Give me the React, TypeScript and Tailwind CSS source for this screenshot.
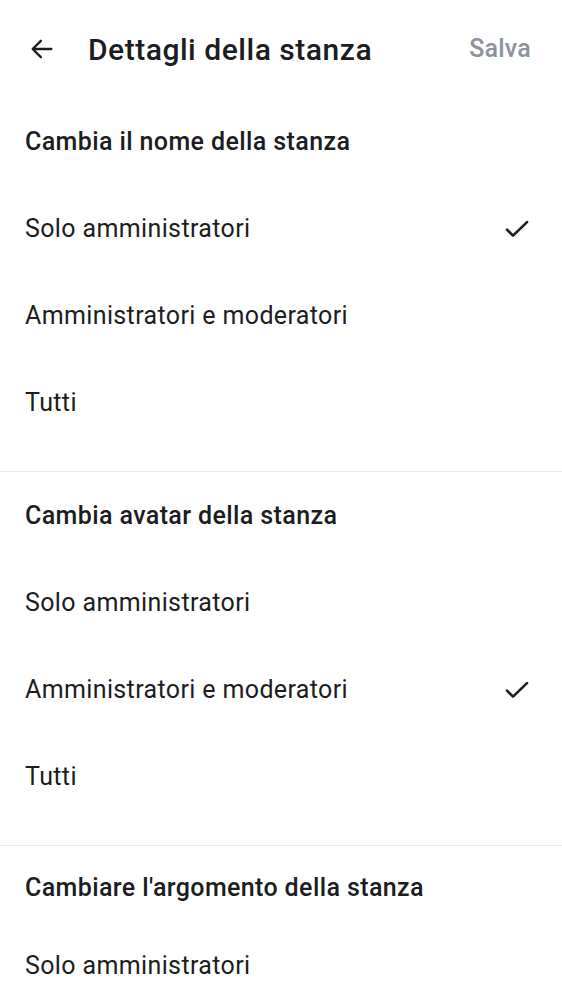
import React from "react";

const Check = () => (
  <svg width="30" height="30" viewBox="0 0 24 24" fill="none" stroke="#1b1d22" strokeWidth="2.1" strokeLinecap="round" strokeLinejoin="round">
    <path d="M4 12.5l4.8 4.8L20 6.5" />
  </svg>
);

const Arrow = () => (
  <svg width="28" height="28" viewBox="0 0 24 24" fill="none" stroke="#1b1d22" strokeWidth="2" strokeLinecap="round" strokeLinejoin="round">
    <path d="M20 12H4.5M11 5l-7 7 7 7" />
  </svg>
);

type Section = { title: string; options: string[]; selected: number };

const sections: Section[] = [
  { title: "Cambia il nome della stanza", options: ["Solo amministratori", "Amministratori e moderatori", "Tutti"], selected: 0 },
  { title: "Cambia avatar della stanza", options: ["Solo amministratori", "Amministratori e moderatori", "Tutti"], selected: 1 },
  { title: "Cambiare l'argomento della stanza", options: ["Solo amministratori", "Amministratori e moderatori", "Tutti"], selected: -1 },
];

export default function App() {
  return (
    <div className="w-[562px] h-[1000px] overflow-hidden bg-white text-[#1b1d22] font-['Roboto','Noto_Sans',sans-serif]">
      <header className="h-[98px] flex items-center pl-[28px] pr-[31px]">
        <Arrow />
        <h1 className="ml-[32px] text-[30px] tracking-[0.5px] font-['Roboto_Medium','Roboto',sans-serif] font-medium flex-1">Dettagli della stanza</h1>
        <span className="text-[25px] tracking-[0.2px] font-['Roboto_Medium','Roboto',sans-serif] font-medium text-[#8d939c]">Salva</span>
      </header>
      {sections.map((s, i) => (
        <section key={i} className={i > 0 ? "border-t border-[#e8eaee]" : ""}>
          <div className={(i === 2 ? "h-[76px] pt-[8px] " : "h-[87px] ") + "flex items-center px-[25px] text-[25px] tracking-[0.37px] font-['Roboto_Medium','Roboto',sans-serif] font-medium"}>{s.title}</div>
          {s.options.map((o, j) => (
            <div key={j} className="h-[87px] flex items-center justify-between pl-[25px] pr-[30px] text-[25px] tracking-[0.37px]">
              <span>{o}</span>
              {s.selected === j && <Check />}
            </div>
          ))}
          <div className="h-[25px]" />
        </section>
      ))}
    </div>
  );
}
